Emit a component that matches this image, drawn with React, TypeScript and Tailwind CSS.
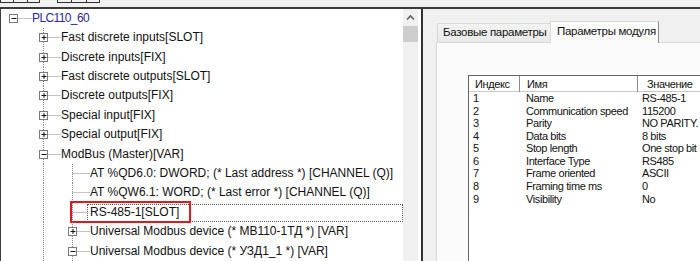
import React from "react";

type TreeItem = {
  text: string;
  level: number;
  box?: "plus" | "minus";
  root?: boolean;
  selected?: boolean;
};

const TREE: TreeItem[] = [
  { text: "PLC110_60", level: 0, box: "minus", root: true },
  { text: "Fast discrete inputs[SLOT]", level: 1, box: "plus" },
  { text: "Discrete inputs[FIX]", level: 1, box: "plus" },
  { text: "Fast discrete outputs[SLOT]", level: 1, box: "plus" },
  { text: "Discrete outputs[FIX]", level: 1, box: "plus" },
  { text: "Special input[FIX]", level: 1, box: "plus" },
  { text: "Special output[FIX]", level: 1, box: "plus" },
  { text: "ModBus (Master)[VAR]", level: 1, box: "minus" },
  { text: "AT %QD6.0: DWORD; (* Last address *) [CHANNEL (Q)]", level: 2 },
  { text: "AT %QW6.1: WORD; (* Last error *) [CHANNEL (Q)]", level: 2 },
  { text: "RS-485-1[SLOT]", level: 2, selected: true },
  { text: "Universal Modbus device (* МВ110-1ТД *) [VAR]", level: 2, box: "plus" },
  { text: "Universal Modbus device (* УЗД1_1 *) [VAR]", level: 2, box: "minus" },
];

const PARAMS = [
  ["1", "Name", "RS-485-1"],
  ["2", "Communication speed", "115200"],
  ["3", "Parity", "NO PARITY."],
  ["4", "Data bits", "8 bits"],
  ["5", "Stop length", "One stop bit"],
  ["6", "Interface Type", "RS485"],
  ["7", "Frame oriented", "ASCII"],
  ["8", "Framing time ms", "0"],
  ["9", "Visibility", "No"],
];

const CX = [12.5, 42.5, 71.5];
const TEXT_X = [31, 60, 89];
const ROW_H = 19.4;

function TreeLines({ item }: { item: TreeItem }) {
  const w = TEXT_X[item.level] - (item.selected ? 3 : 0);
  const cx = CX[item.level];
  const mid = 9.5;
  const dot = { stroke: "#858585", strokeWidth: 1, strokeDasharray: "1 1" };
  return (
    <svg width={w} height={ROW_H} viewBox={`0 0 ${w} ${ROW_H}`} className="shrink-0">
      {/* ancestor guides */}
      {item.level >= 2 && <line x1={CX[1]} y1={0} x2={CX[1]} y2={ROW_H} {...dot} />}
      {item.level > 0 && <line x1={cx} y1={0} x2={cx} y2={ROW_H} {...dot} />}
      <line x1={cx} y1={mid} x2={w} y2={mid} {...dot} />
      {item.box && (
        <g>
          <rect x={cx - 4} y={mid - 4} width={8} height={8} fill="#fff" stroke="#7a7a7a" strokeWidth={1} />
          <line x1={cx - 2} y1={mid} x2={cx + 3} y2={mid} stroke="#111" strokeWidth={1} />
          {item.box === "plus" && (
            <line x1={cx + 0.5} y1={mid - 2.5} x2={cx + 0.5} y2={mid + 2.5} stroke="#111" strokeWidth={1} />
          )}
        </g>
      )}
    </svg>
  );
}

function TreeRow({ item }: { item: TreeItem }) {
  return (
    <div className="relative flex h-[19.4px] items-center">
      <TreeLines item={item} />
      {item.selected ? (
        <div className="flex h-[18px] flex-1 items-center border border-dotted border-[#5a5a5a] pl-[2px] text-[#111]">
          {item.text}
        </div>
      ) : (
        <span className={item.root ? "tracking-[-0.6px] text-[#2a2a96]" : "text-[#111]"}>{item.text}</span>
      )}
      {item.selected && (
        <div className="absolute left-[69px] top-[-2px] h-[22px] w-[121px] border-2 border-[#e0191b]" />
      )}
    </div>
  );
}

export default function App() {
  return (
    <div className="flex h-[261px] w-[700px] flex-col overflow-hidden bg-[#f0f0f0] font-['Liberation_Sans',Arial,sans-serif]">
      {/* toolbar remains */}
      <div className="flex h-[7px] gap-[17px]">
        <div className="flex h-[3px] w-[40px] border-x border-b border-[#333]">
          <div className="w-[13px] border-r border-[#333]" />
          <div className="w-[14px] border-r border-[#333]" />
        </div>
        <div className="flex h-[3px] w-[43px] border-x border-b border-[#333]">
          <div className="w-[14px] border-r border-[#333]" />
          <div className="w-[15px] border-r border-[#333]" />
        </div>
      </div>
      <div className="h-[2px] bg-[#3c3c3c]" />

      <div className="flex flex-1">
        {/* tree panel */}
        <div className="flex w-[421px] border-l border-[#404040] bg-white">
          <div className="w-[402px] text-[12px] leading-[19.4px] whitespace-nowrap">
            {TREE.map((item, i) => (
              <TreeRow key={i} item={item} />
            ))}
          </div>
          <div className="flex w-[15px] flex-col items-center bg-[#f0f0f0]">
            <svg width="15" height="16" viewBox="0 0 15 16" className="mt-[1px]">
              <polyline points="4,9.5 7.5,6 11,9.5" fill="none" stroke="#606060" strokeWidth={1.6} />
            </svg>
            <div className="h-[16px] w-[15px] bg-[#cdcdcd]" />
          </div>
          <div className="w-[3px]" />
        </div>
        <div className="w-[2px] bg-[#333]" />

        {/* properties panel */}
        <div className="flex flex-1 flex-col pl-[13px] text-[#111]">
          <div className="flex h-[33px] items-end pl-[1px] pt-[12px] text-[11.5px]">
            <div className="flex h-[19px] w-[113px] items-center border-l border-t border-[#d9d9d9] bg-gradient-to-b from-[#f3f3f3] to-[#e9e9e9] pl-[5px] tracking-[-0.3px]">
              Базовые параметры
            </div>
            <div className="relative z-10 mb-[-1px] flex h-[22px] w-[109px] items-center border-x border-t border-[#d9d9d9] border-r-[#8c8c8c] bg-[#fbfbfb] pb-[1px] pl-[6px] tracking-[-0.3px]">
              Параметры модуля
            </div>
          </div>
          <div className="flex flex-1 flex-col border-l border-t border-[#d9d9d9] bg-[#fbfbfb] pl-[31px] pt-[32px]">
            <div className="flex-1 border-l border-t border-[#646464] bg-white text-[11px] tracking-[-0.4px]">
              <div className="flex h-[16px] items-center border-b border-[#c8c8c8] pt-[1px]">
                <div className="w-[51px] border-r border-[#8a8a8a] pl-[6px]">Индекс</div>
                <div className="w-[118px] border-r border-[#8a8a8a] pl-[7px]">Имя</div>
                <div className="pl-[9px]">Значение</div>
              </div>
              <div className="leading-[12.6px]">
                {PARAMS.map(([idx, name, value]) => (
                  <div key={idx} className="flex h-[12.6px] whitespace-nowrap">
                    <div className="w-[51px] pl-[4px]">{idx}</div>
                    <div className="w-[118px] pl-[6px]">{name}</div>
                    <div className="pl-[4px]">{value}</div>
                  </div>
                ))}
              </div>
            </div>
          </div>
        </div>
      </div>
    </div>
  );
}
